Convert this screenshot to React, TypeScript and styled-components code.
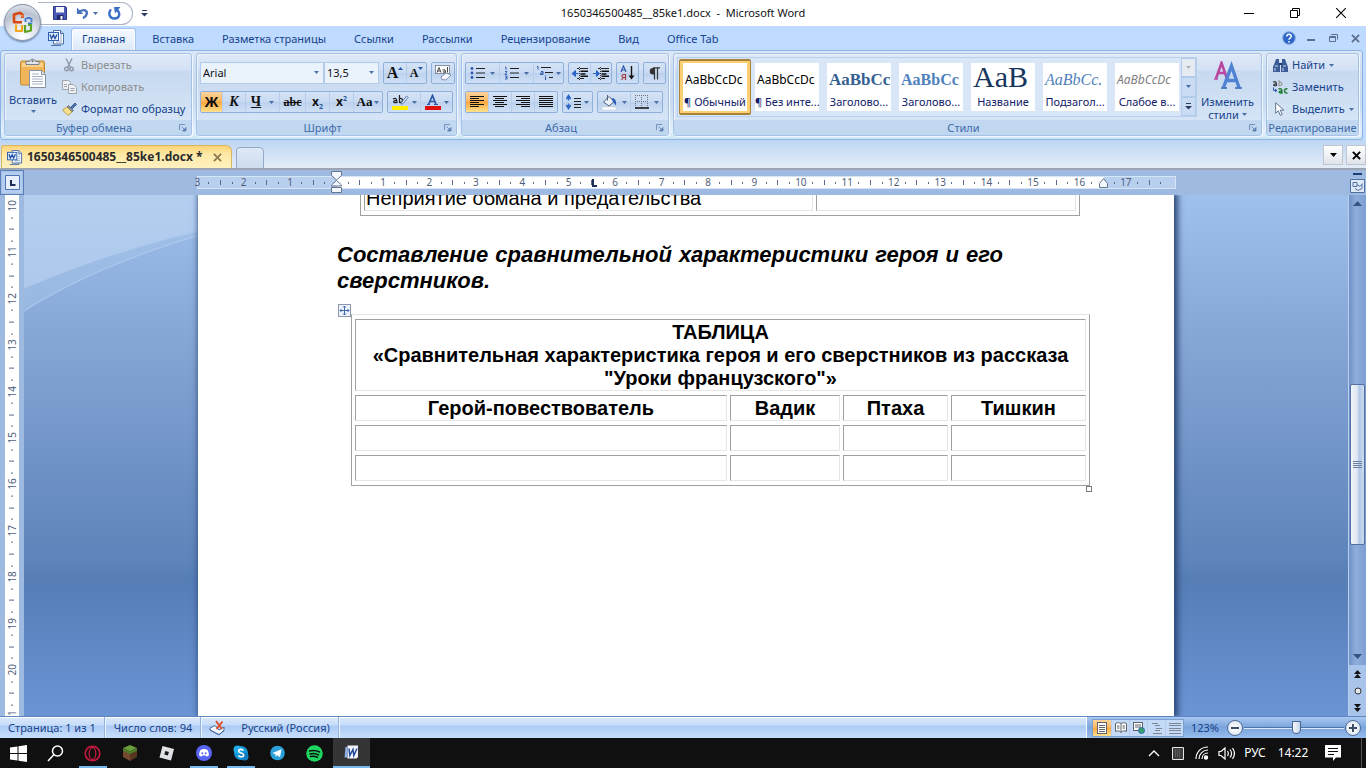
import React from "react";
import styled, { createGlobalStyle, css } from "styled-components";

const UI = `"Noto Sans", "Open Sans", sans-serif`;
const SERIF = `"Liberation Serif", serif`;
const NAVY = "#15428b";

const Global = createGlobalStyle`
  * { box-sizing: border-box; }
  body { margin: 0; font-family: ${UI}; font-size: 11px; line-height: 16px; color: ${NAVY}; background: #9ebae1; }
  button, select { font: inherit; color: inherit; margin: 0; padding: 0; border: 0; background: none; border-radius: 0; }
  svg { display: block; flex: none; }
  p { margin: 0; }
`;

const Shell = styled.div`
  display: flex;
  flex-direction: column;
  height: 100vh;
  overflow: hidden;
`;

/* ---------- title bar ---------- */
const Top = styled.header`
  position: relative;
  flex: none;
`;
const TitleBar = styled.div`
  display: grid;
  grid-template-columns: 1fr auto 1fr;
  align-items: center;
  height: 26px;
  background: #fff;
  color: #111;
`;
const QuickAccess = styled.div`
  display: flex;
  align-items: center;
  padding-left: 38px;
  gap: 8px;
`;
const QuickPill = styled.div`
  display: flex;
  align-items: center;
  gap: 6px;
  width: 95px;
  height: 23px;
  padding-left: 14px;
  border: 1px solid #a9b4c6;
  border-left: 0;
  border-radius: 0 12px 12px 0;
`;
const TitleText = styled.h1`
  margin: 0;
  font-size: 11px;
  font-weight: 400;
  white-space: pre;
`;
const IconButton = styled.button<{ $w?: number; $h?: number }>`
  display: flex;
  align-items: center;
  justify-content: center;
  gap: 4px;
  width: ${(p) => p.$w ?? 16}px;
  height: ${(p) => p.$h ?? 16}px;
`;
const WindowButtons = styled.div`
  display: flex;
  justify-content: flex-end;
  padding-right: 2px;
`;
const OfficeButton = styled.button`
  position: absolute;
  left: 4px;
  top: 4px;
  width: 37px;
  height: 37px;
  display: flex;
  align-items: center;
  justify-content: center;
  border-radius: 50%;
  border: 1px solid #8793a8;
  background: radial-gradient(circle at 50% 90%, #ffffff 0, #dfe4ec 40%, #b9c1d0 65%, #f2f4f8 100%);
  box-shadow: 0 1px 2px #5f77a0;
`;

/* ---------- ribbon tabs ---------- */
const TabRow = styled.nav`
  display: flex;
  align-items: flex-end;
  height: 24px;
  padding: 0 3px 0 48px;
  background: #bfdbff;
`;
const TabIcon = styled.span`
  width: 23px;
  height: 20px;
`;
const Tab = styled.button<{ $active?: boolean }>`
  height: 22px;
  padding: 0 14px;
  white-space: nowrap;
  ${(p) =>
    p.$active &&
    css`
      padding: 0 10px 1px;
      margin-right: 2px;
      border: 1px solid #9fc1ee;
      border-bottom: 0;
      border-radius: 3px 3px 0 0;
      background: linear-gradient(#f5faff, #dde9f8);
      box-shadow: inset 1px 1px 0 #fff, inset -1px 0 0 #fff;
    `}
`;
const MdiButtons = styled.div`
  display: flex;
  align-items: center;
  gap: 6px;
  height: 24px;
  margin-left: auto;
`;

/* ---------- ribbon ---------- */
const RibbonWrap = styled.div`
  padding-right: 3px;
  background: #bfdbff;
`;
const Ribbon = styled.div`
  display: flex;
  gap: 4px;
  height: 90px;
  padding: 2px 3px 3px;
  border: 1px solid #8db2e3;
  border-radius: 3px;
  background: linear-gradient(#dbe7f6, #cfdff2 18%, #c9dbf1 60%, #e3f1ff 92%, #c9e6f5);
`;
const Group = styled.section<{ $w?: number }>`
  display: flex;
  flex-direction: column;
  ${(p) => (p.$w ? `width: ${p.$w}px; flex: none;` : "flex: 1; min-width: 0;")}
  border: 1px solid #a5c2e6;
  border-radius: 3px;
  background: linear-gradient(#dee9f7, #d3e1f4 20%, #c7d9f0 21%, #d9e8f8);
  box-shadow: inset 1px 1px 0 #eaf2fc, 1px 1px 0 #f0f7ff;
`;
const GroupBody = styled.div<{ $pad?: string; $gap?: number; $col?: boolean }>`
  display: flex;
  flex: 1;
  min-height: 0;
  flex-direction: ${(p) => (p.$col ? "column" : "row")};
  gap: ${(p) => p.$gap ?? 0}px;
  padding: ${(p) => p.$pad ?? "0"};
`;
const GroupLabel = styled.div`
  display: flex;
  align-items: center;
  height: 15px;
  padding: 0 4px;
  border-radius: 0 0 3px 3px;
  background: linear-gradient(#c2d8f1, #c0d8ef);
  color: #3e6aaa;
  span { flex: 1; text-align: center; white-space: nowrap; }
`;
const NarrowLabel = styled(GroupLabel)`
  padding: 0;
`;
const Stack = styled.div`
  display: flex;
  flex-direction: column;
`;
const BigButton = styled.button<{ $w: number; $gap?: number }>`
  display: flex;
  flex-direction: column;
  align-items: center;
  gap: ${(p) => p.$gap ?? 0}px;
  width: ${(p) => p.$w}px;
  padding-top: 4px;
  line-height: 13px;
  white-space: nowrap;
`;
const SmallButton = styled.button<{ $off?: boolean }>`
  display: flex;
  align-items: center;
  gap: 4px;
  height: 22px;
  white-space: nowrap;
  color: ${(p) => (p.$off ? "#8d8d8d" : NAVY)};
`;
const IconCell = styled.span`
  display: flex;
  justify-content: center;
  width: 16px;
`;
const Line = styled.span<{ $gap?: number }>`
  display: flex;
  align-items: center;
  gap: ${(p) => p.$gap ?? 4}px;
`;
const Cluster = styled.div`
  display: flex;
  height: 22px;
  border: 1px solid #8fafdc;
  border-radius: 2px;
  background: linear-gradient(#d5e3f5, #c8daf2 50%, #bcd1ee 51%, #cfe0f5);
`;
const Tool = styled.button<{ $w: number; $on?: boolean; $gap?: number }>`
  display: flex;
  align-items: center;
  justify-content: center;
  gap: ${(p) => p.$gap ?? 3}px;
  width: ${(p) => p.$w}px;
  color: #111;
  & + & { border-left: 1px solid #b6cdec; }
  ${(p) => p.$on && css`background: linear-gradient(#fbd49b, #fdb961 45%, #fca63c 50%, #fee28d);`}
`;
const Glyph = styled.span<{ $serif?: boolean; $italic?: boolean; $size?: number; $deco?: string }>`
  font-family: ${(p) => (p.$serif ? SERIF : UI)};
  font-weight: 700;
  font-size: ${(p) => p.$size ?? 14}px;
  line-height: 16px;
  font-style: ${(p) => (p.$italic ? "italic" : "normal")};
  text-decoration: ${(p) => p.$deco ?? "none"};
  sub, sup { font-size: 7px; line-height: 0; color: #2b579a; }
`;
const GrowMark = styled.svg`
  align-self: flex-start;
  margin-top: 4px;
`;
const ComboBox = styled.label<{ $w: number }>`
  position: relative;
  width: ${(p) => p.$w}px;
  height: 22px;
  border: 1px solid #b3cbea;
  background: #eaf2fb;
  color: #111;
  select { appearance: none; width: 100%; height: 20px; padding-left: 2px; outline: 0; }
  svg { position: absolute; right: 4px; top: 8px; pointer-events: none; }
`;

/* ---------- style gallery ---------- */
const Gallery = styled.div`
  display: flex;
  flex: 1;
  height: 60px;
  overflow: hidden;
  border: 1px solid #b9d0ed;
  background: #d8e6f7;
`;
const GalleryItems = styled.div`
  display: flex;
  flex: 1;
  overflow: hidden;
  padding: 1px 0 1px 1px;
`;
const StyleCard = styled.button<{ $on?: boolean }>`
  flex: none;
  width: 72px;
  height: 56px;
  padding: 4px;
  ${(p) =>
    p.$on &&
    css`
      padding: 2px 3px;
      border: 1px solid #a8823a;
      border-width: 2px 1px;
      box-shadow: inset 0 0 0 3px #fbcf72;
      border-radius: 2px;
    `}
`;
const CardFace = styled.span`
  display: flex;
  flex-direction: column;
  width: 64px;
  height: 48px;
  overflow: hidden;
  background: #fff;
`;
const Preview = styled.span<{ $font: string; $size: number; $line?: number; $color: string; $bold?: boolean; $italic?: boolean }>`
  height: 31px;
  padding-left: 2px;
  overflow: hidden;
  text-align: left;
  white-space: nowrap;
  line-height: ${(p) => p.$line ?? 33}px;
  font-family: ${(p) => p.$font};
  font-size: ${(p) => p.$size}px;
  color: ${(p) => p.$color};
  font-weight: ${(p) => (p.$bold ? 700 : 400)};
  font-style: ${(p) => (p.$italic ? "italic" : "normal")};
`;
const CardName = styled.span`
  line-height: 16px;
  color: #10206a;
  white-space: nowrap;
`;
const GalleryScroll = styled.div`
  display: flex;
  flex-direction: column;
  width: 15px;
  button { flex: 1; display: flex; align-items: center; justify-content: center; border: 1px solid #b3cbea; background: #cadcf4; }
  button:first-child { background: #e6ebf2; }
`;

/* ---------- document tabs ---------- */
const DocTabs = styled.div`
  display: flex;
  align-items: flex-end;
  gap: 4px;
  height: 30px;
  padding-left: 1px;
  border-bottom: 2px solid #9ba4b0;
  background: linear-gradient(#bdd6f3, #d9e6f6 70%, #e3ebf6);
`;
const DocTab = styled.button`
  display: flex;
  align-items: center;
  width: 231px;
  height: 23px;
  padding: 0 9px 0 5px;
  gap: 4px;
  border: 1px solid #d9b660;
  border-bottom: 0;
  border-radius: 3px 6px 0 0;
  background: linear-gradient(#fdd377, #ffe9a8 40%, #fff1bf);
  color: #2b2b2b;
  font-size: 12px;
  font-weight: 700;
  white-space: nowrap;
  svg:last-child { margin-left: auto; }
`;
const NewTab = styled.button`
  width: 28px;
  height: 21px;
  border: 1px solid #94a9c5;
  border-bottom: 0;
  border-radius: 4px 5px 0 0;
  background: linear-gradient(#dfe9f6, #cddcf0);
`;
const TabListButtons = styled.div`
  display: flex;
  gap: 3px;
  margin-left: auto;
  margin-bottom: 3px;
  button { background: linear-gradient(#fff, #dfe3ea); border: 1px solid #c0c6cf; }
`;

/* ---------- workspace ---------- */
const Workspace = styled.main`
  display: grid;
  grid-template-columns: 24px minmax(0, 1fr) 18px;
  grid-template-rows: 25px minmax(0, 1fr);
  flex: 1;
  min-height: 0;
`;
const RulerCorner = styled.button`
  display: flex;
  align-items: center;
  justify-content: center;
  border: 1px solid #5d80bb;
  background: #b5cdee;
  box-shadow: inset 0 0 0 1px #a5c0e6;
`;
const RulerRow = styled.div`
  background: #9ebae1;
  overflow: hidden;
  padding-top: 6px;
`;
const RulerStrip = styled.div`
  position: relative;
  width: 979px;
  height: 13px;
  margin: 0 auto;
  border: 1px solid #d6e4f8;
  background: linear-gradient(90deg, #b9cfee 139px, #fff 139px, #fff 906px, #b9cfee 906px);
`;
const RulerScale = styled.div<{ $vertical?: boolean }>`
  display: grid;
  color: #4f5f7a;
  font-size: 10px;
  line-height: 11px;
  ${(p) =>
    p.$vertical
      ? css`
          grid-template-rows: repeat(45, 1fr);
          width: 14px;
          height: 522px;
        `
      : css`
          grid-template-columns: repeat(84, minmax(0, 1fr));
          width: 975px;
          height: 11px;
          margin-left: -6px;
        `}
`;
const Mark = styled.span<{ $vertical?: boolean }>`
  display: flex;
  align-items: center;
  justify-content: center;
  min-width: 0;
  min-height: 0;
  overflow: visible;
  white-space: nowrap;
  ${(p) => p.$vertical && css`writing-mode: vertical-rl; transform: rotate(180deg);`}
`;
const Tick = styled.i<{ $vertical?: boolean; $long?: boolean }>`
  flex: none;
  background: #5b6a85;
  width: ${(p) => (p.$vertical ? (p.$long ? 5 : 2) : 1)}px;
  height: ${(p) => (p.$vertical ? 1 : p.$long ? 5 : 2)}px;
`;
const Marker = styled.svg<{ $x: number; $y: number }>`
  position: absolute;
  left: ${(p) => p.$x}px;
  top: ${(p) => p.$y}px;
`;
const VRuler = styled.div`
  overflow: hidden;
  padding-left: 5px;
  background: #9ebae1;
`;
const VRulerStrip = styled.div`
  width: 14px;
  height: 100%;
  padding-top: 5px;
  background: #fff;
`;
const Canvas = styled.div`
  position: relative;
  overflow: hidden;
  background: linear-gradient(#9fc1eb 0, #7f9fd0 35%, #5d84bb 70%, #567db6 74%, #6a94d4 100%);
`;
const Swoosh = styled.svg`
  position: absolute;
  left: 0;
  top: 0;
`;
const PageShadow = styled.div`
  position: relative;
  width: 976px;
  height: 100%;
  margin: 0 auto;
  box-shadow: 2px 0 6px 2px #2c4a7a;
`;
const Page = styled.article`
  height: 100%;
  padding: 0 84px 0 139px;
  overflow: hidden;
  background: #fff;
  color: #000;
  font-family: "Liberation Sans", Arial, sans-serif;
`;
const DocTable = styled.table<{ $w: number }>`
  width: ${(p) => p.$w}px;
  table-layout: fixed;
  border-collapse: separate;
  border-spacing: 3px 4px;
  border: 1px solid #a0a0a0;
  border-top-color: #e6e6e6;
  font-size: 20px;
  line-height: 23px;
  th, td {
    height: 26px;
    padding: 0 1px;
    border: 1px solid #e6e6e6;
    border-top-color: #a0a0a0;
    border-left-color: #a0a0a0;
    white-space: nowrap;
  }
`;
const UpperTable = styled(DocTable)`
  margin: -15px 0 0 23px;
`;
const TitleCell = styled.th`
  && { height: 72px; white-space: normal; }
`;
const Heading = styled.h2`
  width: 666px;
  margin: 26px 0 0;
  font-size: 22px;
  line-height: 26px;
  font-style: italic;
  text-align: justify;
`;
const TableBlock = styled.div`
  position: relative;
  width: 739px;
  margin: 20px 0 0 14px;
`;
const Handle = styled.button`
  position: absolute;
  left: -13px;
  top: -10px;
  width: 13px;
  height: 13px;
  border: 1px solid #8b98ab;
  background: #eef3fb;
`;
const Resize = styled.i`
  position: absolute;
  right: -2px;
  bottom: -6px;
  width: 6px;
  height: 6px;
  border: 1px solid #7a7a7a;
  background: #fff;
`;

/* ---------- scroll bar ---------- */
const ScrollTop = styled.div`
  display: flex;
  flex-direction: column;
  align-items: center;
  justify-content: space-between;
  padding: 3px 0 2px;
  background: #9ebae1;
`;
const SplitHandle = styled.i`
  width: 9px;
  height: 2px;
  background: #1e3f78;
`;
const ScrollBar = styled.div`
  display: flex;
  flex-direction: column;
  border-left: 1px solid #b9d0ee;
  background: linear-gradient(90deg, #6f91c6, #8eaddc 40%, #7d9ed2);
`;
const ScrollArrow = styled.button`
  display: flex;
  align-items: center;
  justify-content: center;
  height: 17px;
`;
const ThumbTrack = styled.div`
  display: flex;
  flex-direction: column;
  flex: 1;
`;
const Thumb = styled.div`
  display: flex;
  align-items: center;
  justify-content: center;
  flex: 160 0 0;
  margin: 0 1px;
  border: 1px solid #51709f;
  border-radius: 2px;
  background: linear-gradient(90deg, #f3f6fb, #dbe4f1 50%, #b3c8e6 60%, #cbdcf2);
`;
const TrackGap = styled.i<{ $n: number }>`
  flex: ${(p) => p.$n} 0 0;
`;
const BrowseButtons = styled.div`
  display: flex;
  flex-direction: column;
  background: #a9c4ea;
`;

/* ---------- status bar ---------- */
const StatusBar = styled.footer`
  display: flex;
  align-items: stretch;
  flex: none;
  height: 22px;
  border-top: 1px solid #5f86bf;
  box-shadow: inset 0 1px 0 #fff;
  background: linear-gradient(#dbe9fc, #c6dcf9 40%, #aac9f3 41%, #c4dcfb 90%);
`;
const StatusItem = styled.button<{ $pad: string }>`
  display: flex;
  align-items: center;
  gap: 16px;
  padding: ${(p) => p.$pad};
  border-right: 1px solid #93b4e0;
  box-shadow: 1px 0 0 #eaf3ff;
  white-space: nowrap;
`;
const StatusRight = styled.div`
  display: flex;
  align-items: center;
  margin-left: auto;
  padding: 0 5px;
  border-left: 1px solid #fff;
  background: linear-gradient(#a9c8f2, #7fa8dd 45%, #7aa4dc 50%, #97bdec);
`;
const Views = styled.div`
  display: flex;
  height: 18px;
  border: 1px solid #7d9fce;
  background: #c4daf6;
`;
const ZoomControl = styled.div`
  display: flex;
  align-items: center;
  gap: 1px;
`;
const ZoomText = styled.button`
  width: 42px;
  text-align: center;
`;
const ZoomRange = styled.input`
  appearance: none;
  width: 100px;
  height: 16px;
  margin: 0;
  background: linear-gradient(transparent 7px, #4d74a8 7px, #4d74a8 8px, #dbe9fb 8px, #dbe9fb 9px, transparent 9px);
  &::-webkit-slider-thumb {
    appearance: none;
    width: 9px;
    height: 13px;
    border: 1px solid #4a6490;
    border-radius: 1px 1px 5px 5px;
    background: linear-gradient(90deg, #f6f9fd, #c7d6ea);
  }
`;
const RoundButton = styled.button`
  display: flex;
  align-items: center;
  justify-content: center;
  width: 16px;
  height: 16px;
  border: 1px solid #4e6a95;
  border-radius: 50%;
  background: radial-gradient(#fff, #d5dfee);
`;

/* ---------- system task bar ---------- */
const TaskBar = styled.footer`
  display: flex;
  flex: none;
  height: 30px;
  background: #101010;
  color: #fff;
`;
const TaskButton = styled.button<{ $running?: boolean; $active?: boolean }>`
  display: flex;
  flex-direction: column;
  align-items: center;
  justify-content: space-between;
  width: 37px;
  height: 30px;
  padding-top: 7px;
  background: ${(p) => (p.$active ? "#353535" : "transparent")};
  &::after {
    content: "";
    width: ${(p) => (p.$active ? 37 : 28)}px;
    height: 2px;
    background: ${(p) => (p.$running || p.$active ? "#76b9ed" : "transparent")};
  }
`;
const Tray = styled.div`
  display: flex;
  align-items: center;
  margin-left: auto;
`;
const TrayText = styled.button<{ $w: number }>`
  width: ${(p) => p.$w}px;
  text-align: center;
  font-size: 12px;
`;
const ShowDesktop = styled.button`
  width: 5px;
  height: 30px;
  margin-left: 9px;
  border-left: 1px solid #555;
`;

/* ---------- icons ---------- */
const Caret = ({ c = "#4a6fa8", w = 5 }: { c?: string; w?: number }) => (
  <svg width={w} height={w > 5 ? 4 : 3} viewBox="0 0 6 3" preserveAspectRatio="none"><path d="M0 0h6L3 3z" fill={c} /></svg>
);
const Launcher = () => (
  <svg width="8" height="8" viewBox="0 0 8 8"><path d="M.5 6V.5H6" fill="none" stroke="#7391bd" /><path d="M2.500 2.500l3 3M7 3.500V7H3.500z" stroke="#5b7db1" fill="#5b7db1" strokeWidth=".8" /></svg>
);
const WordDoc = ({ w = 17 }: { w?: number }) => (
  <svg width={w} height={w - 1} viewBox="0 0 17 16">
    <path d="M5.500.5h7l3 3v10.500h-10z" fill="#fff" stroke="#4a6ea9" />
    <path d="M12.500.5v3h3" fill="#cfe0f5" stroke="#4a6ea9" />
    <path d="M8 11h6M8 13h6M12 5h2M12 7h2M12 9h2" stroke="#7795c4" strokeWidth=".8" />
    <rect x=".5" y="2.500" width="10" height="8" fill="#dce9fa" stroke="#2f5fae" />
    <path d="M2 4.500l1.500 4 2-3.500 1.500 3.500 2-4" fill="none" stroke="#1f4fa2" strokeWidth="1.300" />
    <path d="M3 15.500h10" stroke="#5274a8" />
  </svg>
);
const OfficeLogo = () => (
  <svg width="24" height="24" viewBox="0 0 24 24" fill="none" strokeLinejoin="round">
    <path d="M11 11.300H3V3.500l6-1.700 2.500 2V7" stroke="#d9480f" strokeWidth="2.600" />
    <path d="M10.500 4l1.500 1.500" stroke="#f59a4a" strokeWidth="1.600" />
    <path d="M14.500 11V7h6v5.500h-4" stroke="#3d7cc9" strokeWidth="1.800" strokeDasharray="4 1" />
    <path d="M5 13.500v6.500h6v-6" stroke="#f2a81d" strokeWidth="2.200" />
    <path d="M14 14v7l6-1.500v-5.500h-3" stroke="#5ba323" strokeWidth="2.200" />
    <circle cx="12.500" cy="12" r="1" fill="#fff" />
  </svg>
);
const Save = () => (
  <svg width="14" height="14" viewBox="0 0 14 14"><path d="M.5.5h12l1 1v12H.5z" fill="#4a59b5" stroke="#2d3b8c" /><path d="M3 1h8v5.500H3z" fill="#f2f5fc" /><path d="M4 9h6.500v4.500H4z" fill="#20296a" /><path d="M7.500 10h2v3.500h-2z" fill="#fff" /></svg>
);
const Undo = () => (
  <svg width="13" height="13" viewBox="0 0 14 13"><path d="M4 4.500C8 1.500 12.500 3 11.500 7c-.4 2-2 3.500-4 4.500" fill="none" stroke="#4a72bd" strokeWidth="2.600" /><path d="M1 0v7h7z" fill="#4a72bd" /></svg>
);
const Redo = () => (
  <svg width="13" height="13" viewBox="0 0 13 13"><path d="M3 2.500C0 5.500 1 11.500 6.500 11.500S12.500 5.500 9 3" fill="none" stroke="#3a6fc4" strokeWidth="2.400" /><path d="M6 0h6.500L7 6.500z" fill="#3a6fc4" /></svg>
);
const QatMenu = () => (
  <svg width="7" height="7" viewBox="0 0 7 7"><path d="M1 .5h5" stroke="#2a3d60" /><path d="M0 3h7L3.500 6.500z" fill="#2a3d60" /></svg>
);
const Paste = () => (
  <svg width="27" height="31" viewBox="0 0 27 31">
    <rect x=".5" y="3" width="24" height="24" rx="1.500" fill="#efb558" stroke="#c08a35" />
    <path d="M2 5h21v4H2z" fill="#f8d08b" />
    <path d="M6 6.500V3.500h3.500C10 .5 15 .5 15.500 3.500H19v3z" fill="#e3e7ec" stroke="#76808e" />
    <circle cx="12.500" cy="3" r="1.200" fill="#76808e" />
    <path d="M9.500 12.500h12l4 4v13h-16z" fill="#fff" stroke="#8592a6" />
    <path d="M21.500 12.500v4h4" fill="#dfe6f0" stroke="#8592a6" />
    <path d="M12 18.500h11M12 21h11M12 23.500h11M12 26h11M12 16h7" stroke="#a7b4c7" />
  </svg>
);
const Cut = () => (
  <svg width="10" height="14" viewBox="0 0 10 14" fill="none" stroke="#8f98a6" strokeWidth="1.400"><path d="M2 .5l4.500 9M8 .5l-4.500 9" /><circle cx="2.500" cy="11" r="1.800" /><circle cx="7.500" cy="11" r="1.800" /></svg>
);
const Copy = () => (
  <svg width="15" height="14" viewBox="0 0 15 14" fill="#eef0f3" stroke="#9da4ae"><path d="M.5.5h6l2 2v7h-8z" /><path d="M6.500 4.500h5l3 3v6h-8z" /><path d="M2 4.500h3M2 6.500h3M8.500 8.500h4M8.500 10.500h4" /></svg>
);
const Brush = () => (
  <svg width="15" height="14" viewBox="0 0 15 14"><path d="M9 5l4-4 1.500 1.500-4 4z" fill="#5278b8" stroke="#27457c" strokeWidth=".8" /><path d="M6.500 3.500l5 5-1.500 1.500-5-5z" fill="#8291a8" stroke="#3d4c66" strokeWidth=".6" /><path d="M5 5l5 5-4 3.500L.5 8z" fill="#f6e08a" stroke="#a48a34" strokeWidth=".8" /></svg>
);
const Bullets = ({ kind }: { kind: "dot" | "num" | "multi" }) => (
  <svg width={kind === "multi" ? 18 : 15} height="14" viewBox={kind === "multi" ? "0 0 18 14" : "0 0 15 13"}>
    {kind === "multi" ? (
      <>
        <path d="M5 1.500h10M9 6.500h8M13 11.500h4" stroke="#222" />
        <path d="M1 .5h1v3M5 5.500h2v3H4.500V7H7M9.500 9.500v1M9.500 11v3" stroke="#2b57b0" fill="none" />
      </>
    ) : (
      <>
        <path d="M6 2h9M6 6.500h9M6 11h9" stroke="#222" />
        {kind === "dot" ? (
          <g fill="#2b57b0"><circle cx="2" cy="2" r="1.400" /><circle cx="2" cy="6.500" r="1.400" /><circle cx="2" cy="11" r="1.400" /></g>
        ) : (
          <path d="M1 .5h1v3M1 5h2l-2 3h2M1 9.500h2v3H1M1.500 11H3" stroke="#2b57b0" fill="none" strokeWidth=".9" />
        )}
      </>
    )}
  </svg>
);
const Indent = ({ out }: { out?: boolean }) => (
  <svg width="16" height="13" viewBox="0 0 16 13"><path d="M5 1.500h2M8 1.500h8M5 11.500h2M8 11.500h4" stroke="#222" strokeWidth="1.200" /><path d="M8.500 4.300h7.500M8.500 7h5M8.500 9.300h7.500" stroke="#111" strokeWidth="1.600" /><path d="M7.500 0v13" stroke="#333" strokeDasharray="1 1" /><path d={out ? "M0 6.500L3.500 3.500v6zM3 6.500h3.500" : "M6.500 6.500L3.500 3.500v6zM0 6.500h4"} fill="#2b64c8" stroke="#2b64c8" /></svg>
);
const Align = ({ kind }: { kind: "l" | "c" | "r" | "j" }) => (
  <svg width="14" height="12" viewBox="0 0 14 12">
    {[0, 1, 2, 3, 4, 5].map((i) => {
      const w = kind === "j" || i % 2 === 0 ? 14 : 9;
      const x = kind === "r" ? 14 - w : kind === "c" ? Math.floor((14 - w) / 2) : 0;
      return <rect key={i} x={x} y={i * 2} width={w} height="1" fill="#111" />;
    })}
  </svg>
);
const Sort = () => (
  <svg width="15" height="16" viewBox="0 0 15 16"><path d="M1 7l2.500-6L6 7M2 5h3" fill="none" stroke="#2b57a8" strokeWidth="1.200" /><path d="M5.500 15V9.500H3.500c-2 0-2 3 0 3h2M3.500 12.500L1.500 15" fill="none" stroke="#a33a3a" strokeWidth="1.200" /><path d="M11.500 1v11" stroke="#111" strokeWidth="1.400" /><path d="M8.500 10.500h6l-3 4z" fill="#111" /></svg>
);
const Pilcrow = () => (
  <svg width="11" height="13" viewBox="0 0 11 13"><path d="M10.500 1H4a3.200 3.200 0 0 0 0 6.500h1V1z" fill="#333" /><path d="M5.500 1v11.500M8.500 1v11.500M4 .8h7" stroke="#333" strokeWidth="1.200" /></svg>
);
const Spacing = () => (
  <svg width="15" height="16" viewBox="0 0 15 16"><path d="M2.500 2v4.500M2.500 9.500V14M.3 5l2.200-3.500L4.700 5M.3 11l2.200 3.500L4.700 11" fill="none" stroke="#2b64c8" strokeWidth="1.500" /><path d="M8 4.500h7M8 7.500h7M8 10.500h7M8 13.500h7" stroke="#222" strokeWidth="1.200" /></svg>
);
const Bucket = () => (
  <svg width="16" height="15" viewBox="0 0 16 15"><path d="M2.500 7L8 1.500 13 6.500 8 11z" fill="#eef2f8" stroke="#4f5f7a" /><path d="M6.500 0v5.500" stroke="#4f5f7a" /><path d="M10.500 3c4 0 5 3.500 4.500 7.500L12 7z" fill="#2e5fb4" /><path d="M1 12h14v3H1z" fill="#fff" stroke="#b8c2d1" strokeWidth=".5" /></svg>
);
const Borders = () => (
  <svg width="14" height="14" viewBox="0 0 14 14"><path d="M.5 0v13M6.500 0v13M12.500 0v13M0 .5h13M0 6.500h13" stroke="#6b7480" strokeDasharray="1 1" /><path d="M0 13h14" stroke="#111" strokeWidth="1.500" /></svg>
);
const Eraser = () => (
  <svg width="17" height="16" viewBox="0 0 17 16"><rect x=".5" y=".5" width="14" height="8" fill="#fff" stroke="#5a6a86" strokeWidth=".7" /><path d="M2 7.500l2-5 2 5M2.700 6h2.600M7.500 5c2.500-1 3 0 3 2.500-3 .5-3-1.500 0-1.500M12.500 2v5.500" fill="none" stroke="#333" strokeWidth=".9" /><path d="M6 12l5-4 5 2-5 5-4-.5z" fill="#f7f9fc" stroke="#6b7fa3" strokeWidth=".8" /></svg>
);
const Highlighter = () => (
  <svg width="17" height="16" viewBox="0 0 17 16"><path d="M1 5c3-1.500 4 0 4 3.500C1 9.500 0 6.500 5 6.300M7.500 1v7.500c4 .5 4-5 0-4" fill="none" stroke="#222" strokeWidth="1.200" /><path d="M9.500 8.500L14.500 2l1.700 1.400L11 9.700l-2 .5z" fill="#d9e4f5" stroke="#44679f" strokeWidth=".8" /><path d="M0 12h16v4H0z" fill="#ffee00" /></svg>
);
const FontColor = () => (
  <svg width="16" height="16" viewBox="0 0 16 16"><path d="M3.500 10.500L7.500 1.500l3.500 9M5 7.500h5" fill="none" stroke="#2b57a8" strokeWidth="1.700" /><path d="M2 10.500h3M9 10.500h4" stroke="#2b57a8" /><path d="M0 12h16v4H0z" fill="#e0100d" /></svg>
);
const ChangeStyles = () => (
  <svg width="28" height="28" viewBox="0 0 28 28"><path d="M2 17.500L7.500 2 13 17.500M3.500 12h8" fill="none" stroke="#b9479f" strokeWidth="2.600" /><path d="M0 18h4M11 18h4" stroke="#b9479f" strokeWidth="1.300" /><path d="M9.500 26.500L17.500 5l7.500 21.500M12.500 19.500h10" fill="none" stroke="#4f82d2" strokeWidth="3.400" /><path d="M7 27h6M21 27h7" stroke="#3565b8" strokeWidth="1.600" /></svg>
);
const Find = () => (
  <svg width="15" height="13" viewBox="0 0 15 13"><path d="M3 0h3v3l1 3v7H0V8l2-5zM9 0h3l1 3 2 5v5H8V6l1-3z" fill="#3b5c97" /><path d="M2 7h3M2 9v3M10 7h3M10 9v3" stroke="#c9daf3" /><path d="M6 5h3" stroke="#1f3c73" strokeWidth="2" /></svg>
);
const Replace = () => (
  <svg width="16" height="14" viewBox="0 0 16 14" fill="none"><path d="M1 2c3-1 3.500 0 3.500 3.500C1 6.500.5 4 4.500 3.700" stroke="#333" strokeWidth="1.200" /><path d="M7 0v5.500c4 .5 4-4 0-3.500" stroke="#9a9a9a" strokeWidth="1.200" /><path d="M1.500 7.500v3h3M3 9l2 1.500L3 12" stroke="#2b57a8" /><path d="M6.500 9c3-1 3.500 0 3.500 4-3.500.500-4-2 0-2M15.500 8.700c-4-.7-4 5 0 4.300" stroke="#1f7d34" strokeWidth="1.500" /></svg>
);
const Pointer = () => (
  <svg width="10" height="14" viewBox="0 0 10 14"><path d="M.7.7v10.500l2.600-2.400 2 4.500 1.900-.9-2-4.300h3.600z" fill="#fff" stroke="#566782" strokeWidth=".9" /></svg>
);
const Help = () => (
  <svg width="14" height="14" viewBox="0 0 14 14"><circle cx="7" cy="7" r="6.300" fill="#2c66c9" stroke="#8aa9dc" /><path d="M4.700 5.500c0-3 4.700-2.800 4.600 0C9.300 7 7 7 7 8.800M7 10v1.600" fill="none" stroke="#fff" strokeWidth="1.500" /></svg>
);
const Cross = ({ s = 9, c = "#5c6f8f", w = 1.5 }: { s?: number; c?: string; w?: number }) => (
  <svg width={s} height={s} viewBox="0 0 10 10"><path d="M1 1l8 8M9 1L1 9" stroke={c} strokeWidth={w} /></svg>
);
const ViewIcon = ({ kind }: { kind: number }) => (
  <svg width="12" height="12" viewBox="0 0 12 12" fill="none" stroke="#5f646b">
    {kind === 0 && <><rect x="1.500" y=".5" width="9" height="11" fill="#fff" /><path d="M3 3.500h6M3 5.500h6M3 7.500h6M3 9.500h6" /></>}
    {kind === 1 && <><path d="M.5 1.500c2-1 4-1 5.500 0 1.500-1 3.500-1 5.500 0v8c-2-1-4-1-5.500 1-1.500-2-3.500-2-5.500-1zM6 1.500v9" fill="#fff" /><path d="M2 4h2.500M2 6h2.500M7.500 4H10M7.500 6H10" /></>}
    {kind === 2 && <><rect x=".5" y=".5" width="9" height="8" fill="#fff" /><path d="M2 3h6M2 5h6" /><circle cx="8.500" cy="8.500" r="3" fill="#3aa06a" stroke="#2a6bb0" /></>}
    {kind === 3 && <path d="M1 1.500h6M4 3.500h5M5 6.500h6M4 8.500h5M2 11.500h9" stroke="#7c8796" />}
    {kind === 4 && <path d="M0 1.500h12M0 3.500h12M0 6.500h12M0 8.500h12M0 11.500h12" stroke="#7c8796" />}
  </svg>
);
const Proofing = () => (
  <svg width="16" height="16" viewBox="0 0 16 16"><path d="M1 8l5-2.500 4 4.500 5-3v3.500l-5 4.500-9-5z" fill="#f2f6fc" stroke="#46689f" /><path d="M1 10l9 4.500 5-4" fill="none" stroke="#46689f" /><path d="M7 1l6 8M13.500 1.500L7.500 9" stroke="#e2512b" strokeWidth="2" /></svg>
);

const taskIcons: { name: string; run?: boolean; active?: boolean; icon: React.ReactNode }[] = [
  { name: "Пуск", icon: <svg width="17" height="17" viewBox="0 0 17 17" fill="#fff"><path d="M0 2.500l7.500-1V8H0zM8.500 1.300L17 0v8H8.500zM0 9h7.500v6.500l-7.500-1zM8.500 9H17v8l-8.500-1.300z" /></svg> },
  { name: "Поиск", icon: <svg width="17" height="17" viewBox="0 0 17 17" fill="none" stroke="#fff" strokeWidth="1.500"><circle cx="10.500" cy="6" r="5" /><path d="M7 9.500L1 16" /></svg> },
  { name: "Opera GX", run: true, icon: <svg width="17" height="17" viewBox="0 0 17 17" fill="none" stroke="#c5193f"><circle cx="8.500" cy="8.500" r="7.300" strokeWidth="1.600" /><ellipse cx="8.500" cy="8.500" rx="3.300" ry="6" strokeWidth="1.300" /></svg> },
  { name: "Minecraft", icon: <svg width="16" height="16" viewBox="0 0 16 16"><path d="M8 0l7 3-7 3.500L1 3z" fill="#67a03c" /><path d="M1 3l7 3.500V16l-7-4z" fill="#74492f" /><path d="M15 3L8 6.500V16l7-4z" fill="#57341f" /><path d="M1 3l7 3.500V9L1 6zM15 3L8 6.500V9l7-3z" fill="#4c7a2b" /></svg> },
  { name: "Roblox", icon: <svg width="15" height="16" viewBox="0 0 15 16"><path d="M3.500 1L15 4l-3 11.500L.5 12.500z" fill="#dfe1e4" /><path d="M6.300 6l3.600 1-1 3.600-3.600-1z" fill="#16181b" /></svg> },
  { name: "Discord", run: true, icon: <svg width="16" height="16" viewBox="0 0 16 16"><circle cx="8" cy="8" r="8" fill="#5865f2" /><path d="M4.500 5c2-1.200 5-1.200 7 0 1 1.700 1.500 3.500 1.300 5.500-1 .7-1.800 1-2.500 1l-.6-1H6.300l-.6 1c-.7 0-1.500-.3-2.500-1C3 8.500 3.500 6.700 4.500 5z" fill="#fff" /><circle cx="6.300" cy="8.200" r="1" fill="#5865f2" /><circle cx="9.700" cy="8.200" r="1" fill="#5865f2" /></svg> },
  { name: "Skype", run: true, icon: <svg width="16" height="16" viewBox="0 0 16 16"><circle cx="8" cy="8" r="7" fill="#1596d4" /><circle cx="4.500" cy="4.500" r="4" fill="#1cabe8" /><circle cx="11.500" cy="11.500" r="4" fill="#0d7fc2" /><path d="M10.500 5.500C9.500 3.800 5.500 4 5.700 6.200c.2 2.100 5 1.400 5 3.700 0 2.300-4.500 2.500-5.300.6" fill="none" stroke="#fff" strokeWidth="1.600" /></svg> },
  { name: "Telegram", icon: <svg width="15" height="16" viewBox="0 0 15 16"><circle cx="7.500" cy="8" r="7.300" fill="#2ba0da" /><path d="M2.500 8l9-3.800-1.500 8-2.800-2-1.500 1.500-.2-2.500z" fill="#fff" /></svg> },
  { name: "Spotify", icon: <svg width="17" height="17" viewBox="0 0 17 17"><circle cx="8.500" cy="8.500" r="8.300" fill="#1ed760" /><path d="M3.500 6c3.500-1 7-.6 10 1M4 9c3-.8 6-.4 8.500 1M4.500 11.500c2.500-.6 4.800-.3 7 .9" fill="none" stroke="#101010" strokeWidth="1.500" strokeLinecap="round" /></svg> },
  { name: "Word", active: true, icon: <svg width="15" height="14" viewBox="0 0 15 14"><path d="M3.500.5h10.500V12l-1.500 1.500h-9z" fill="#f2f6fc" /><path d="M1.500 2h2v10.500h-3z" fill="#8fb0e4" /><path d="M5 3.500l.8 7L9 4.500l.8 6L13 3.500" fill="none" stroke="#244a9c" strokeWidth="1.500" /></svg> },
];

const styleCards = [
  { name: "¶ Обычный", text: "AaBbCcDc", font: UI, size: 12, color: "#000", on: true },
  { name: "¶ Без инте...", text: "AaBbCcDc", font: UI, size: 12, color: "#000" },
  { name: "Заголово...", text: "AaBbCc", font: SERIF, size: 17, color: "#365f91", bold: true },
  { name: "Заголово...", text: "AaBbCc", font: SERIF, size: 16, color: "#4f81bd", bold: true },
  { name: "Название", text: "AaB", font: SERIF, size: 30, line: 28, color: "#17365d" },
  { name: "Подзагол...", text: "AaBbCc.", font: SERIF, size: 16, color: "#4f81bd", italic: true },
  { name: "Слабое в...", text: "AaBbCcDc", font: UI, size: 12, color: "#808080", italic: true },
];

const tabs = ["Вставка", "Разметка страницы", "Ссылки", "Рассылки", "Рецензирование", "Вид", "Office Tab"];

const scale = (from: number, count: number, vertical?: boolean) =>
  Array.from({ length: count }, (_, i) => {
    const q = from * 4 + i;
    const cm = q / 4;
    return (
      <Mark key={i} $vertical={vertical}>
        {q % 4 === 0 ? (cm !== 0 ? Math.abs(cm) : null) : <Tick $vertical={vertical} $long={q % 2 === 0} />}
      </Mark>
    );
  });

export default function App() {
  return (
    <Shell>
      <Global />
      <Top>
        <TitleBar>
          <QuickAccess>
            <QuickPill>
              <IconButton aria-label="Сохранить"><Save /></IconButton>
              <IconButton aria-label="Отменить" $w={26}><Undo /><Caret /></IconButton>
              <IconButton aria-label="Повторить"><Redo /></IconButton>
            </QuickPill>
            <IconButton aria-label="Настройка панели" $w={7}><QatMenu /></IconButton>
          </QuickAccess>
          <TitleText>{"1650346500485__85ke1.docx  -  Microsoft Word"}</TitleText>
          <WindowButtons>
            <IconButton $w={46} $h={24} aria-label="Свернуть"><svg width="10" height="10"><path d="M0 5.500h10" stroke="#000" /></svg></IconButton>
            <IconButton $w={46} $h={24} aria-label="Развернуть"><svg width="10" height="10" fill="none" stroke="#000"><path d="M.5 2.500h7v7h-7zM2.500 2.500v-2h7v7h-2" /></svg></IconButton>
            <IconButton $w={46} $h={24} aria-label="Закрыть"><Cross s={12} c="#000" w={0.9} /></IconButton>
          </WindowButtons>
        </TitleBar>
        <TabRow>
          <TabIcon><WordDoc /></TabIcon>
          <Tab $active>Главная</Tab>
          {tabs.map((t) => <Tab key={t}>{t}</Tab>)}
          <MdiButtons>
            <IconButton aria-label="Справка"><Help /></IconButton>
            <IconButton aria-label="Свернуть документ"><svg width="8" height="8"><path d="M0 6h8" stroke="#5c6f8f" strokeWidth="2" /></svg></IconButton>
            <IconButton aria-label="Восстановить документ"><svg width="9" height="8" fill="none" stroke="#5c6f8f"><path d="M.5 2.500h6v5h-6zM2 .5h6.500v5M.5 3.500h6" /></svg></IconButton>
            <IconButton aria-label="Закрыть документ"><Cross w={2} /></IconButton>
          </MdiButtons>
        </TabRow>
        <OfficeButton aria-label="Office"><OfficeLogo /></OfficeButton>
      </Top>

      <RibbonWrap>
        <Ribbon>
          <Group $w={188}>
            <GroupBody $pad="0 0 0 4px" $gap={4}>
              <BigButton $w={48} $gap={4}><Paste /><span>Вставить</span><Caret /></BigButton>
              <Stack>
                <SmallButton $off><IconCell><Cut /></IconCell>Вырезать</SmallButton>
                <SmallButton $off><IconCell><Copy /></IconCell>Копировать</SmallButton>
                <SmallButton><IconCell><Brush /></IconCell>Формат по образцу</SmallButton>
              </Stack>
            </GroupBody>
            <GroupLabel><span>Буфер обмена</span><Launcher /></GroupLabel>
          </Group>

          <Group $w={261}>
            <GroupBody $pad="8px 3px 0" $gap={7} $col>
              <Line>
                <Line $gap={0}>
                  <ComboBox $w={124}><select aria-label="Шрифт"><option>Arial</option></select><Caret /></ComboBox>
                  <ComboBox $w={55}><select aria-label="Размер"><option>13,5</option></select><Caret /></ComboBox>
                </Line>
                <Cluster>
                  <Tool $w={22} $gap={0} aria-label="Увеличить"><Glyph $serif $size={16}>A</Glyph><GrowMark width="5" height="3"><path d="M0 3h5L2.500 0z" fill="#2b57a8" /></GrowMark></Tool>
                  <Tool $w={20} $gap={0} aria-label="Уменьшить"><Glyph $serif $size={12}>A</Glyph><GrowMark width="5" height="3"><path d="M0 0h5L2.500 3z" fill="#2b57a8" /></GrowMark></Tool>
                </Cluster>
                <Cluster><Tool $w={22} aria-label="Очистить формат"><Eraser /></Tool></Cluster>
              </Line>
              <Line>
                <Cluster>
                  <Tool $w={21} $on><Glyph>Ж</Glyph></Tool>
                  <Tool $w={23}><Glyph $serif $italic>К</Glyph></Tool>
                  <Tool $w={34} $gap={8}><Glyph $serif $deco="underline">Ч</Glyph><Caret /></Tool>
                  <Tool $w={26}><Glyph $serif $size={12} $deco="line-through">abc</Glyph></Tool>
                  <Tool $w={24}><Glyph $size={12}>x<sub>2</sub></Glyph></Tool>
                  <Tool $w={24}><Glyph $size={12}>x<sup>2</sup></Glyph></Tool>
                  <Tool $w={29} $gap={2}><Glyph $serif $size={13}>Aa</Glyph><Caret /></Tool>
                </Cluster>
                <Cluster>
                  <Tool $w={32} aria-label="Выделение"><Highlighter /><Caret /></Tool>
                  <Tool $w={32} aria-label="Цвет текста"><FontColor /><Caret /></Tool>
                </Cluster>
              </Line>
            </GroupBody>
            <GroupLabel><span>Шрифт</span><Launcher /></GroupLabel>
          </Group>

          <Group $w={208}>
            <GroupBody $pad="8px 3px 0" $gap={7} $col>
              <Line>
                <Cluster>
                  <Tool $w={33} $gap={5} aria-label="Маркеры"><Bullets kind="dot" /><Caret /></Tool>
                  <Tool $w={34} $gap={5} aria-label="Нумерация"><Bullets kind="num" /><Caret /></Tool>
                  <Tool $w={30} $gap={2} aria-label="Список"><Bullets kind="multi" /><Caret /></Tool>
                </Cluster>
                <Cluster>
                  <Tool $w={21} aria-label="Уменьшить отступ"><Indent out /></Tool>
                  <Tool $w={21} aria-label="Увеличить отступ"><Indent /></Tool>
                </Cluster>
                <Cluster><Tool $w={21} aria-label="Сортировка"><Sort /></Tool></Cluster>
                <Cluster><Tool $w={21} aria-label="Знаки"><Pilcrow /></Tool></Cluster>
              </Line>
              <Line>
                <Cluster>
                  <Tool $w={22} $on aria-label="По левому краю"><Align kind="l" /></Tool>
                  <Tool $w={23} aria-label="По центру"><Align kind="c" /></Tool>
                  <Tool $w={23} aria-label="По правому краю"><Align kind="r" /></Tool>
                  <Tool $w={23} aria-label="По ширине"><Align kind="j" /></Tool>
                </Cluster>
                <Cluster><Tool $w={29} aria-label="Интервал"><Spacing /><Caret /></Tool></Cluster>
                <Cluster>
                  <Tool $w={32} $gap={5} aria-label="Заливка"><Bucket /><Caret /></Tool>
                  <Tool $w={32} $gap={5} aria-label="Границы"><Borders /><Caret /></Tool>
                </Cluster>
              </Line>
            </GroupBody>
            <GroupLabel><span>Абзац</span><Launcher /></GroupLabel>
          </Group>

          <Group>
            <GroupBody $pad="3px 3px 0">
              <Gallery>
                <GalleryItems>
                  {styleCards.map((c, i) => (
                    <StyleCard key={i} $on={c.on}>
                      <CardFace>
                        <Preview $font={c.font} $size={c.size} $line={c.line} $color={c.color} $bold={c.bold} $italic={c.italic}>{c.text}</Preview>
                        <CardName>{c.name}</CardName>
                      </CardFace>
                    </StyleCard>
                  ))}
                </GalleryItems>
                <GalleryScroll>
                  <button aria-label="Вверх"><Caret c="#a9b3c1" /></button>
                  <button aria-label="Вниз"><Caret /></button>
                  <button aria-label="Ещё"><QatMenu /></button>
                </GalleryScroll>
              </Gallery>
              <BigButton $w={61}><ChangeStyles /><BigCaption><span>Изменить</span><Line $gap={3}>стили <Caret /></Line></BigCaption></BigButton>
            </GroupBody>
            <GroupLabel><span>Стили</span><Launcher /></GroupLabel>
          </Group>

          <Group $w={93}>
            <GroupBody $pad="0 0 0 5px" $col>
              <SmallButton><IconCell><Find /></IconCell>Найти <Caret /></SmallButton>
              <SmallButton><IconCell><Replace /></IconCell>Заменить</SmallButton>
              <SmallButton><IconCell><Pointer /></IconCell>Выделить <Caret /></SmallButton>
            </GroupBody>
            <NarrowLabel><span>Редактирование</span></NarrowLabel>
          </Group>
        </Ribbon>
      </RibbonWrap>

      <DocTabs>
        <DocTab><WordDoc w={16} /><span>1650346500485__85ke1.docx *</span><Cross c="#8b7a50" w={2} /></DocTab>
        <NewTab aria-label="Новая вкладка" />
        <TabListButtons>
          <IconButton $w={20} $h={20} aria-label="Список вкладок"><Caret c="#000" w={7} /></IconButton>
          <IconButton $w={20} $h={20} aria-label="Закрыть вкладку"><Cross c="#000" w={2.2} /></IconButton>
        </TabListButtons>
      </DocTabs>

      <Workspace>
        <RulerCorner aria-label="Тип табуляции"><svg width="15" height="15"><path d="M.5.5h14v14H.5z" fill="#e6effb" stroke="#4f74b4" /><path d="M6 5v5h4.500" fill="none" stroke="#1c2f55" strokeWidth="2" /></svg></RulerCorner>
        <RulerRow>
          <RulerStrip>
            <RulerScale>{scale(-3, 84)}</RulerScale>
            <Marker $x={133} $y={-6} width="11" height="22" fill="#f3f6fb" stroke="#66758f"><path d="M.5.5h10v4l-5 4.500-5-4.500zM5.500 9.500l5 4.500v1H.5v-1zM.5 16.500h10v5H.5z" /></Marker>
            <Marker $x={393} $y={2} width="8" height="9"><path d="M2 0v7h4" fill="none" stroke="#1c2f55" strokeWidth="2" /></Marker>
            <Marker $x={900} $y={1} width="11" height="11" fill="#f3f6fb" stroke="#66758f"><path d="M5.500.5l4 5v4h-8v-4z" /></Marker>
          </RulerStrip>
        </RulerRow>
        <ScrollTop><SplitHandle /><IconButton $w={15} $h={14} aria-label="Линейка"><svg width="15" height="14" fill="#dfe9f7" stroke="#51709f"><path d="M.5.5h14v13H.5z" /><path d="M3 3.500h4v4H3zM7 5.500l3 2 2.500-3M5 9.500l3 2 4-2v-4" fill="none" /></svg></IconButton></ScrollTop>

        <VRuler><VRulerStrip><RulerScale $vertical>{scale(10, 45, true)}</RulerScale></VRulerStrip></VRuler>
        <Canvas>
          <Swoosh width="175" height="120">
            <path d="M0 0h175v37C115 50 50 72 0 94z" fill="#c2d9f3" fillOpacity=".6" />
            <path d="M0 94C50 72 115 50 175 35v6C115 58 50 84 0 117z" fill="#a5c3ea" fillOpacity=".5" />
            <path d="M0 116C50 84 115 58 175 40" fill="none" stroke="#b9d2f2" strokeOpacity=".7" />
          </Swoosh>
          <PageShadow>
            <Page>
              <UpperTable $w={720}>
                <colgroup><col width="449" /><col /></colgroup>
                <tbody><tr><td>Неприятие обмана и предательства</td><td /></tr></tbody>
              </UpperTable>
              <Heading>Составление сравнительной характеристики героя и его сверстников.</Heading>
              <TableBlock>
                <DocTable $w={739}>
                  <colgroup><col width="372" /><col width="110" /><col width="105" /><col width="135" /></colgroup>
                  <thead>
                    <tr><TitleCell colSpan={4}>ТАБЛИЦА<br />«Сравнительная характеристика героя и его сверстников из рассказа "Уроки французского"»</TitleCell></tr>
                    <tr><th>Герой-повествователь</th><th>Вадик</th><th>Птаха</th><th>Тишкин</th></tr>
                  </thead>
                  <tbody>
                    <tr><td /><td /><td /><td /></tr>
                    <tr><td /><td /><td /><td /></tr>
                  </tbody>
                </DocTable>
                <Handle aria-label="Переместить таблицу"><svg width="11" height="11" fill="none" stroke="#3f68ad"><path d="M5.500 1v9M1 5.500h9M4 2.500l1.500-1.500L7 2.500M4 8.500L5.500 10 7 8.500M2.500 4L1 5.500 2.500 7M8.500 4L10 5.500 8.500 7" /></svg></Handle>
                <Resize />
              </TableBlock>
            </Page>
          </PageShadow>
        </Canvas>
        <ScrollBar>
          <ScrollArrow aria-label="Прокрутить вверх"><svg width="9" height="5"><path d="M0 5h9L4.500 0z" fill="#35547f" /></svg></ScrollArrow>
          <ThumbTrack>
            <TrackGap $n={173} />
            <Thumb><svg width="9" height="8"><path d="M0 .5h9M0 2.500h9M0 4.500h9M0 6.500h9" stroke="#6c7f9d" /></svg></Thumb>
            <TrackGap $n={103} />
          </ThumbTrack>
          <ScrollArrow aria-label="Прокрутить вниз"><svg width="9" height="5"><path d="M0 0h9L4.500 5z" fill="#35547f" /></svg></ScrollArrow>
          <BrowseButtons>
            <ScrollArrow aria-label="Предыдущая"><svg width="7" height="8"><path d="M0 4h7L3.500 0zM0 8h7L3.500 4z" fill="#111" /></svg></ScrollArrow>
            <ScrollArrow aria-label="Объект"><svg width="8" height="8"><circle cx="4" cy="4" r="3" fill="#e3e8ef" stroke="#333" /></svg></ScrollArrow>
            <ScrollArrow aria-label="Следующая"><svg width="7" height="8"><path d="M0 0h7L3.500 4zM0 4h7L3.500 8z" fill="#111" /></svg></ScrollArrow>
          </BrowseButtons>
        </ScrollBar>
      </Workspace>

      <StatusBar>
        <StatusItem $pad="0 8px">Страница: 1 из 1</StatusItem>
        <StatusItem $pad="0 8px 0 9px">Число слов: 94</StatusItem>
        <StatusItem $pad="0 8px"><Proofing />Русский (Россия)</StatusItem>
        <StatusRight>
          <Views>
            {[0, 1, 2, 3, 4].map((k) => <Tool key={k} $w={18} $on={k === 0} aria-label={`Режим ${k + 1}`}><ViewIcon kind={k} /></Tool>)}
          </Views>
          <ZoomControl>
            <ZoomText>123%</ZoomText>
            <RoundButton aria-label="Уменьшить"><svg width="8" height="8"><path d="M0 4h8" stroke="#3e4d66" strokeWidth="2" /></svg></RoundButton>
            <ZoomRange type="range" min={0} max={100} defaultValue={53} aria-label="Масштаб" />
            <RoundButton aria-label="Увеличить"><svg width="8" height="8"><path d="M0 4h8M4 0v8" stroke="#3e4d66" strokeWidth="2" /></svg></RoundButton>
          </ZoomControl>
        </StatusRight>
      </StatusBar>

      <TaskBar>
        {taskIcons.map((t) => <TaskButton key={t.name} aria-label={t.name} $running={t.run} $active={t.active}>{t.icon}</TaskButton>)}
        <Tray>
          <IconButton $w={24} aria-label="Скрытые значки"><svg width="12" height="7" fill="none" stroke="#fff" strokeWidth="1.300"><path d="M1 6l5-5 5 5" /></svg></IconButton>
          <IconButton $w={24} aria-label="Устройство"><svg width="12" height="13"><path d="M.5.5h11v12H.5z" fill="#3d3d3d" stroke="#e6e6e6" /><path d="M3 3h6M3 5h6M3 7h6M3 9h6" stroke="#777" strokeDasharray="1 1" /></svg></IconButton>
          <IconButton $w={24} aria-label="Сеть"><svg width="14" height="14" fill="none" stroke="#fff" strokeWidth="1.200"><path d="M1 13C1 6 6 1 13 1M4 13c0-5 4-9 9-9M7 13c0-3.500 2.500-6 6-6" /><circle cx="11" cy="11.500" r="1.600" fill="#fff" /></svg></IconButton>
          <IconButton $w={24} aria-label="Громкость"><svg width="17" height="13" fill="none" stroke="#fff" strokeWidth="1.200"><path d="M1 4.500h2L7 1v11L3 8.500H1zM9.500 4c1 1.500 1 3.500 0 5M12 2.500c2 2.500 2 5.500 0 8M14.500 1c2.500 3.500 2.500 7.500 0 11" /></svg></IconButton>
          <TrayText $w={34}>РУС</TrayText>
          <TrayText $w={42}>14:22</TrayText>
          <IconButton $w={38} aria-label="Уведомления"><svg width="16" height="16"><path d="M0 0h16v12.500h-5L8 16v-3.500H0z" fill="#fff" /><path d="M3 3.500h10M3 6.500h10M3 9.500h6" stroke="#101010" /></svg></IconButton>
          <ShowDesktop aria-label="Свернуть все окна" />
        </Tray>
      </TaskBar>
    </Shell>
  );
}

const BigCaption = styled.span`
  display: flex;
  flex-direction: column;
  align-items: center;
  padding-top: 6px;
`;
